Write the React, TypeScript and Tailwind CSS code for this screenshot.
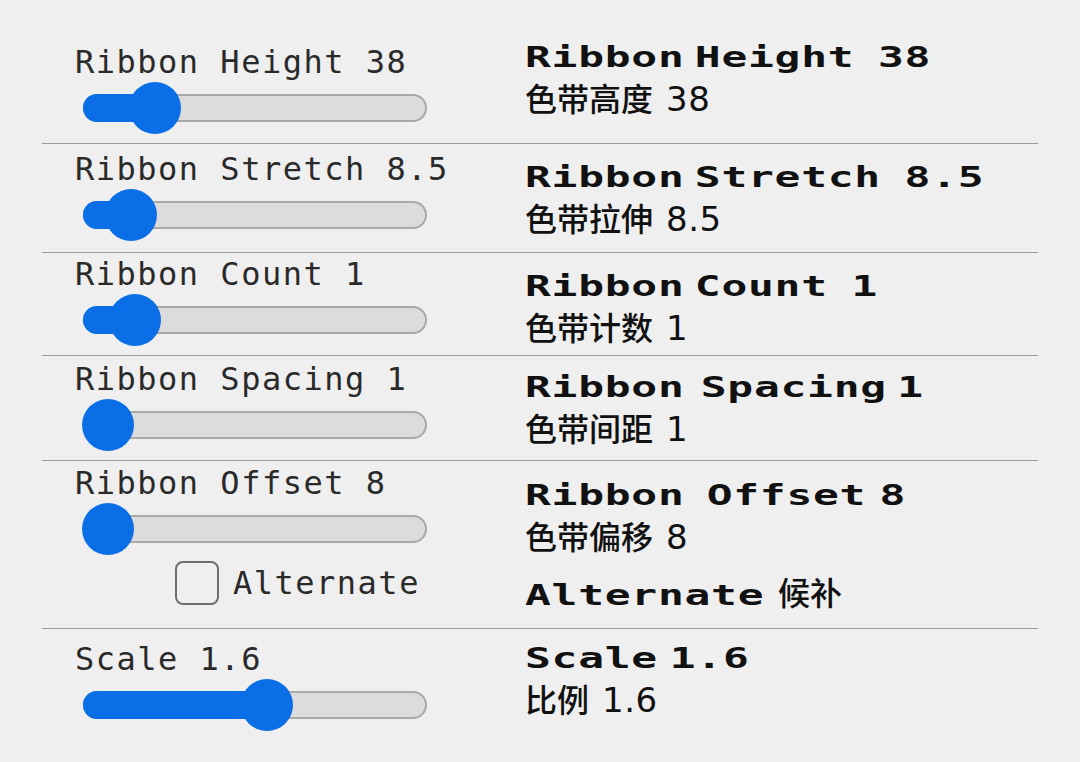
import React from "react";

type Row = {
  label: string;
  title: [string, string][]; // word + left margin class
  zh: string;
  num: string;
  thumb: number; // thumb centre, px from track start
  rowH: string;
  lpt: string;
  rpt: string;
  alternate?: boolean;
  last?: boolean;
};

const rows: Row[] = [
  {
    label: "Ribbon Height 38",
    title: [["Ribbon", ""], ["Height", "ml-[7px]"], ["38", "ml-[16px]"]],
    zh: "色带高度", num: "38", thumb: 72, rowH: "h-[144px]", lpt: "pt-[44px]", rpt: "pt-[41px]",
  },
  {
    label: "Ribbon Stretch 8.5",
    title: [["Ribbon", ""], ["Stretch", "ml-[7px]"], ["8.5", "ml-[16px]"]],
    zh: "色带拉伸", num: "8.5", thumb: 48, rowH: "h-[109px]", lpt: "pt-[7px]", rpt: "pt-[17px]",
  },
  {
    label: "Ribbon Count 1",
    title: [["Ribbon", ""], ["Count", "ml-[7px]"], ["1", "ml-[16px]"]],
    zh: "色带计数", num: "1", thumb: 52, rowH: "h-[103px]", lpt: "pt-[3px]", rpt: "pt-[17px]",
  },
  {
    label: "Ribbon Spacing 1",
    title: [["Ribbon", ""], ["Spacing", "ml-[11px]"], ["1", "ml-[7px]"]],
    zh: "色带间距", num: "1", thumb: 25, rowH: "h-[105px]", lpt: "pt-[5px]", rpt: "pt-[15px]",
  },
  {
    label: "Ribbon Offset 8",
    title: [["Ribbon", ""], ["Offset", "ml-[15px]"], ["8", "ml-[9px]"]],
    zh: "色带偏移", num: "8", thumb: 25, rowH: "h-[168px]", lpt: "pt-[4px]", rpt: "pt-[18px]", alternate: true,
  },
  {
    label: "Scale 1.6",
    title: [["Scale", ""], ["1.6", "ml-[8px]"]],
    zh: "比例", num: "1.6", thumb: 184, rowH: "h-[133px]", lpt: "pt-[12px]", rpt: "pt-[13px]", last: true,
  },
];

const Slider = ({ thumb }: { thumb: number }) => (
  <div className="relative ml-2 mt-[2px] h-[52px] w-[344px]">
    <div className="absolute left-0 top-[12px] h-[28px] w-full rounded-full border-2 border-[#a9a9a9] bg-[#dcdcdc]" />
    <div className="absolute left-0 top-[12px] h-[28px] rounded-full bg-[#0a6fe6]" style={{ width: thumb }} />
    <div className="absolute top-0 h-[52px] w-[52px] rounded-full bg-[#0a6fe6]" style={{ left: thumb - 26 }} />
  </div>
);

const monoLabel = "font-['DejaVu_Sans_Mono',monospace] text-[32px] leading-[36px] tracking-[1.5px] text-[#2a2a2a] whitespace-nowrap";
const wideTitle = "font-['DejaVu_Sans_Mono',monospace] font-bold text-[29px] leading-[32px] tracking-[0.5px] text-[#111] whitespace-nowrap scale-x-[1.48] origin-left";
const zhText = "font-['Noto_Sans_CJK_SC',sans-serif] font-medium text-[32px] leading-[34px] text-[#111] whitespace-nowrap";
const numText = "font-['DejaVu_Sans',sans-serif] text-[34px] leading-[34px] tracking-[0.5px] text-[#111] whitespace-nowrap";

export default function App() {
  return (
    <div className="min-h-screen w-full overflow-hidden bg-[#efefef]">
      <div className="ml-[42px] w-[996px]">
        {rows.map((r) => (
          <div key={r.label} className={`flex ${r.rowH} ${r.last ? "" : "border-b border-[#9c9c9c]"}`}>
            <div className={`w-[483px] pl-[33px] ${r.lpt}`}>
              <div className={monoLabel}>{r.label}</div>
              <Slider thumb={r.thumb} />
              {r.alternate && (
                <div className="ml-[100px] mt-[6px] flex items-center gap-[14px]">
                  <div className="h-[44px] w-[44px] rounded-[8px] border-2 border-[#6f6f6f]" />
                  <span className={monoLabel}>Alternate</span>
                </div>
              )}
            </div>
            <div className={`flex-1 ${r.rpt}`}>
              <div className={wideTitle}>
                {r.title.map(([w, ml]) => (
                  <span key={w} className={ml}>
                    {w}
                  </span>
                ))}
              </div>
              <div className="mt-[7px] flex items-baseline">
                <span className={zhText}>{r.zh}</span>
                <span className={`ml-[13px] ${numText}`}>{r.num}</span>
              </div>
              {r.alternate && (
                <div className="mt-[20px] flex items-baseline">
                  <span className={`inline-block w-[253px] ${wideTitle}`}>Alternate</span>
                  <span className={zhText}>候补</span>
                </div>
              )}
            </div>
          </div>
        ))}
      </div>
    </div>
  );
}
